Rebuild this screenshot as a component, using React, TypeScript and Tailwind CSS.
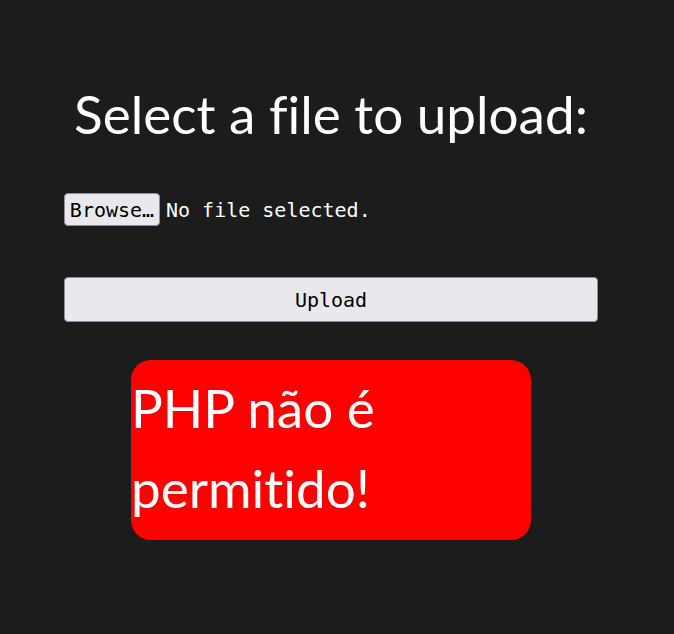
import React from "react";

export default function App() {
  return (
    <div className="min-h-screen w-full bg-[#1c1c1c] text-white [font-family:Lato,sans-serif] [font-variant-ligatures:none]">
      <div className="ml-[64px] w-[534px] pt-[82px]">
        <h1 className="whitespace-nowrap text-center text-[53px] leading-[64px] font-normal">Select a file to upload:</h1>
        <div className="mt-[47px] flex items-center [font-family:'DejaVu_Sans_Mono',monospace] text-[20px]">
          <span className="flex h-[33px] w-[96px] items-center justify-center rounded-[4px] border border-[#8f8f9d] bg-[#e9e9ed] text-black">
            Browse…
          </span>
          <span className="ml-[6px] leading-[24px] text-white">No file selected.</span>
        </div>
        <button className="mt-[51px] flex h-[45px] w-[534px] items-center justify-center rounded-[4px] border border-[#8f8f9d] bg-[#e9e9ed] text-[20px] text-black [font-family:'DejaVu_Sans_Mono',monospace]">
          Upload
        </button>
        <div className="mx-auto mt-[38px] h-[180px] w-[400px] rounded-[20px] bg-[#ff0000] pt-[8px] text-[53px] leading-[80px] text-white">
          PHP não é permitido!
        </div>
      </div>
    </div>
  );
}
